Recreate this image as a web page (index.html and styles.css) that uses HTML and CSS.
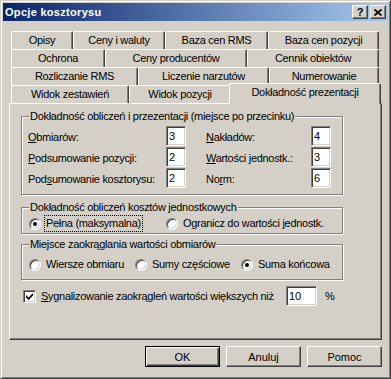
FILE: index.html
```html
<!DOCTYPE html>
<html lang="pl">
<head>
    <meta charset="UTF-8">
    <title>Opcje kosztorysu</title>
    <link rel="stylesheet" href="styles.css">
</head>
<body>
    <div class="window">
        <div class="titlebar">
            <span class="title">Opcje kosztorysu</span>
            <div class="caption-buttons">
                <span class="cap-btn cap-help">?</span>
                <span class="cap-btn cap-close">
                    <svg width="8" height="7" viewBox="0 0 8 7">
                        <path d="M0.5 0.5 L7.5 6.5 M7.5 0.5 L0.5 6.5" stroke="#000" stroke-width="1.7" fill="none"/>
                    </svg>
                </span>
            </div>
        </div>

        <div class="dialog">
            <div class="tabs">
                <div class="tab-row row-1">
                    <div class="tab">Opisy</div>
                    <div class="tab">Ceny i waluty</div>
                    <div class="tab">Baza cen RMS</div>
                    <div class="tab">Baza cen pozycji</div>
                </div>
                <div class="tab-row row-2">
                    <div class="tab">Ochrona</div>
                    <div class="tab">Ceny producentów</div>
                    <div class="tab">Cennik obiektów</div>
                </div>
                <div class="tab-row row-3">
                    <div class="tab">Rozliczanie RMS</div>
                    <div class="tab">Liczenie narzutów</div>
                    <div class="tab">Numerowanie</div>
                </div>
                <div class="tab-row row-4">
                    <div class="tab">Widok zestawień</div>
                    <div class="tab">Widok pozycji</div>
                    <div class="tab active">Dokładność prezentacji</div>
                </div>
            </div>

            <div class="panel">
                <div class="group group-precision">
                    <div class="group-title">Dokładność obliczeń i przezentacji (miejsce po przecinku)</div>
                    <div class="fields">
                        <div class="field-grid left">
                            <label><u>O</u>bmiarów:</label>
                            <input class="edit" type="text" value="3">
                            <label><u>P</u>odsumowanie pozycji:</label>
                            <input class="edit" type="text" value="2">
                            <label>Pod<u>s</u>umowanie kosztorysu:</label>
                            <input class="edit" type="text" value="2">
                        </div>
                        <div class="field-grid right">
                            <label><u>N</u>akładów:</label>
                            <input class="edit" type="text" value="4">
                            <label><u>W</u>artości jednostk.:</label>
                            <input class="edit" type="text" value="3">
                            <label>No<u>r</u>m:</label>
                            <input class="edit" type="text" value="6">
                        </div>
                    </div>
                </div>

                <div class="group group-unit">
                    <div class="group-title">Dokładność obliczeń kosztów jednostkowych</div>
                    <div class="options">
                        <div class="option">
                            <span class="radio checked"></span>
                            <span class="focus">Pełna (maksymalna)</span>
                        </div>
                        <div class="option">
                            <span class="radio"></span>
                            <span>Ogranicz do wartości jednostk.</span>
                        </div>
                    </div>
                </div>

                <div class="group group-rounding">
                    <div class="group-title">Miejsce zaokrąglania wartości obmiarów</div>
                    <div class="options">
                        <div class="option">
                            <span class="radio"></span>
                            <span>Wiersze obmiaru</span>
                        </div>
                        <div class="option">
                            <span class="radio"></span>
                            <span>Sumy częściowe</span>
                        </div>
                        <div class="option">
                            <span class="radio checked"></span>
                            <span>Suma końcowa</span>
                        </div>
                    </div>
                </div>

                <div class="check-row">
                    <span class="checkbox">
                        <svg width="7" height="7" viewBox="0 0 7 7">
                            <polygon points="0,2 2.5,4.5 7,0 7,2.5 2.5,7 0,4.5" fill="#000"/>
                        </svg>
                    </span>
                    <span class="check-label"><u>S</u>ygnalizowanie zaokrągleń wartości większych niż</span>
                    <input class="edit edit-wide" type="text" value="10">
                    <span class="percent">%</span>
                </div>
            </div>

            <div class="buttons">
                <button class="btn default">OK</button>
                <button class="btn">Anuluj</button>
                <button class="btn">Pomoc</button>
            </div>
        </div>
    </div>
</body>
</html>
```

FILE: styles.css
```css
:root {
    --face: #d4d0c8;
    --light: #ffffff;
    --shadow: #808080;
    --dark: #404040;
    --caption-from: #0a246a;
    --caption-to: #a6caf0;
}

* {
    margin: 0;
    padding: 0;
    box-sizing: border-box;
}

body {
    background-color: var(--face);
    font-family: 'Liberation Sans', Arial, sans-serif;
    font-size: 11px;
    letter-spacing: -0.3px;
    color: #000;
}

.window {
    width: 391px;
    height: 379px;
    background-color: var(--face);
    border: 1px solid;
    border-color: var(--face) var(--dark) var(--dark) var(--face);
    box-shadow: inset 1px 1px var(--light), inset -1px -1px var(--shadow);
    padding: 2px;
}

/* caption */
.titlebar {
    height: 18px;
    display: flex;
    align-items: center;
    background: linear-gradient(to right, var(--caption-from), var(--caption-to));
}

.title {
    padding-left: 2px;
    color: #fff;
    font-weight: bold;
    letter-spacing: 0.3px;
    line-height: 18px;
}

.caption-buttons {
    margin-left: auto;
    display: flex;
    gap: 2px;
    padding-right: 2px;
}

.cap-btn {
    width: 16px;
    height: 14px;
    display: flex;
    align-items: center;
    justify-content: center;
    background-color: var(--face);
    border: 1px solid;
    border-color: var(--light) var(--dark) var(--dark) var(--light);
    box-shadow: inset -1px -1px var(--shadow);
}

.cap-help {
    font-weight: bold;
    font-size: 11px;
    letter-spacing: 0;
    line-height: 12px;
}

/* dialog body */
.dialog {
    padding: 10px 6px 0 6px;
}

.tabs {
    margin-left: 2px;
}

.tab-row {
    display: grid;
    height: 18px;
}

.row-1 { grid-template-columns: 62px 92px 103px 111px; }
.row-2 { grid-template-columns: 94px 142px 132px; }
.row-3 { grid-template-columns: 127px 131px 110px; }
.row-4 { grid-template-columns: 118px 102px 148px; }

.tab {
    border-top: 1px solid var(--light);
    border-left: 1px solid var(--light);
    border-right: 1px solid var(--dark);
    border-radius: 2px 2px 0 0;
    box-shadow: inset -1px 0 var(--shadow);
    background-color: var(--face);
    text-align: center;
    line-height: 17px;
    white-space: nowrap;
}

.tab.active {
    position: relative;
    z-index: 1;
    margin: -2px -2px -1px -2px;
}

.panel {
    height: 237px;
    border: 1px solid;
    border-color: var(--light) var(--dark) var(--dark) var(--light);
    box-shadow: inset -1px -1px var(--shadow);
    padding-top: 12px;
}

/* group boxes */
.group {
    width: 322px;
    margin-left: 11px;
    border: 1px solid var(--shadow);
    box-shadow: 1px 1px 0 var(--light), inset 1px 1px 0 var(--light);
}

.group + .group {
    margin-top: 12px;
}

.group-title {
    width: fit-content;
    margin: -7px 0 0 7px;
    padding: 0 1px;
    line-height: 13px;
    background-color: var(--face);
}

.group-precision {
    padding-bottom: 6px;
}

.fields {
    display: flex;
    gap: 20px;
    margin-top: 3px;
    padding-left: 6px;
}

.field-grid {
    display: grid;
    grid-auto-rows: 20px;
    row-gap: 1px;
    align-items: center;
}

.field-grid.left { grid-template-columns: 138px 20px; }
.field-grid.right { grid-template-columns: 105px 20px; }

.field-grid label {
    padding-top: 2px;
}

.edit {
    width: 20px;
    height: 20px;
    padding: 0 2px;
    font: inherit;
    letter-spacing: 0;
    color: #000;
    background-color: #fff;
    border: 1px solid;
    border-color: var(--shadow) var(--light) var(--light) var(--shadow);
    box-shadow: inset 1px 1px var(--dark), inset -1px -1px var(--face);
    outline: none;
}

.edit-wide {
    width: 31px;
}

.options {
    display: grid;
    padding-left: 7px;
    line-height: 13px;
}

.group-unit {
    padding-bottom: 3px;
}

.group-unit .options {
    grid-template-columns: 137px auto;
    margin-top: 3px;
}

.group-rounding {
    margin-top: 10px !important;
    padding-bottom: 8px;
}

.group-rounding .options {
    grid-template-columns: 106px 106px auto;
    margin-top: 7px;
}

.option {
    display: flex;
    align-items: center;
    gap: 5px;
    white-space: nowrap;
}

.radio {
    flex: none;
    width: 12px;
    height: 12px;
    display: flex;
    align-items: center;
    justify-content: center;
    border-radius: 50%;
    border: 1px solid;
    border-color: var(--shadow) var(--light) var(--light) var(--shadow);
    box-shadow: inset 1px 1px var(--dark), inset -1px -1px var(--face);
    background-color: #fff;
}

.radio.checked::after {
    content: "";
    width: 4px;
    height: 4px;
    border-radius: 50%;
    background-color: #000;
}

.focus {
    outline: 1px dotted #000;
    outline-offset: 1px;
}

/* checkbox line */
.check-row {
    display: flex;
    align-items: center;
    height: 20px;
    margin: 6px 0 0 13px;
}

.checkbox {
    flex: none;
    width: 13px;
    height: 13px;
    display: flex;
    align-items: center;
    justify-content: center;
    background-color: #fff;
    border: 1px solid;
    border-color: var(--shadow) var(--light) var(--light) var(--shadow);
    box-shadow: inset 1px 1px var(--dark), inset -1px -1px var(--face);
}

.check-label {
    width: 245px;
    margin-left: 5px;
    white-space: nowrap;
}

.percent {
    margin-left: 8px;
}

/* buttons */
.buttons {
    display: flex;
    justify-content: flex-end;
    gap: 6px;
    margin-top: 6px;
}

.btn {
    width: 75px;
    height: 21px;
    font: inherit;
    color: #000;
    background-color: var(--face);
    border: 1px solid;
    border-color: var(--light) var(--dark) var(--dark) var(--light);
    box-shadow: inset -1px -1px var(--shadow);
}

.btn.default {
    border-color: #000;
    box-shadow: inset 1px 1px var(--light), inset -1px -1px var(--dark), inset -2px -2px var(--shadow);
}
```
